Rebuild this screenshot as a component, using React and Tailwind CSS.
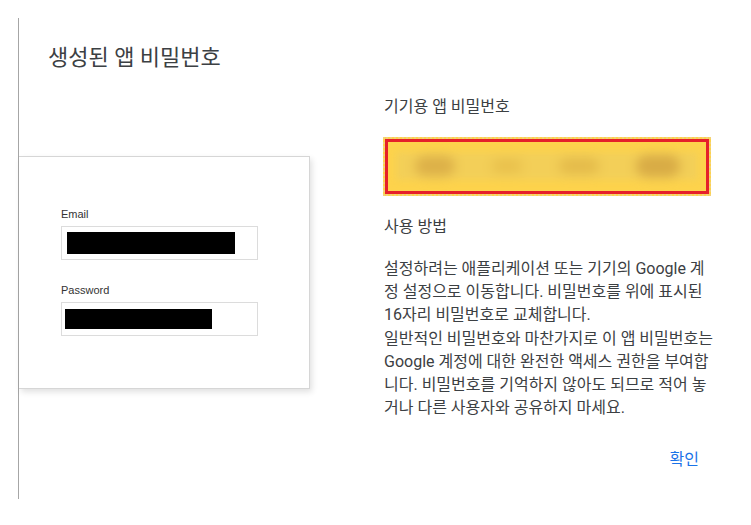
import React from 'react';

const ko = { fontFamily: 'Roboto, "Noto Sans CJK KR", sans-serif' };
const arial = { fontFamily: '"Liberation Sans", Arial, sans-serif' };

const Field = ({ label, bar, pad }) => (
  <div>
    <p className="text-[11px] text-[#333] font-medium leading-none mb-[6px]" style={arial}>{label}</p>
    <div className={`w-[197px] h-[34px] border border-[#dcdcdc] flex items-center ${pad}`}>
      <div className={`bg-black ${bar}`}></div>
    </div>
  </div>
);

const App = () => {
  return (
    <div className="w-[751px] h-[525px] bg-white flex pt-[18px] pl-[18px] overflow-hidden" style={ko}>
      <div className="w-[366px] h-[481px] border-l border-[#a6a6a6] shrink-0">
        <h1 className="pl-[29px] pt-[25px] text-[22px] leading-[30px] text-[#3c4043]">생성된 앱 비밀번호</h1>
        <div className="mt-[83px] w-[291px] h-[233px] bg-white border border-l-0 border-[#d6d6d6] shadow-[2px_3px_6px_rgba(0,0,0,0.12)] pl-[42px] pt-[52px] flex flex-col gap-[25px]">
          <Field label="Email" bar="w-[168px] h-[22px]" pad="pl-[5px]" />
          <Field label="Password" bar="w-[147px] h-[20px]" pad="pl-[3px]" />
        </div>
      </div>
      <div className="w-[330px] pt-[77px] text-[#3c4043]">
        <h2 className="text-[16px] leading-[24px]">기기용 앱 비밀번호</h2>
        <div className="mt-[18px] w-[328px] h-[59px] -ml-px bg-[#fdd34c] border-2 border-dotted border-[#f2d27a]">
          <div className="w-full h-full border-[3px] border-[#e5202a] relative overflow-hidden">
            <div className="absolute left-[8px] right-[8px] top-[10px] h-[28px] bg-[#f3cf58] blur-[3px] flex items-center justify-around">
              <span className="w-[40px] h-[20px] rounded-full bg-[#dcb048] blur-[4px]"></span>
              <span className="w-[30px] h-[14px] rounded-full bg-[#e8c04c] blur-[4px]"></span>
              <span className="w-[40px] h-[16px] rounded-full bg-[#e4bb4a] blur-[4px]"></span>
              <span className="w-[44px] h-[22px] rounded-full bg-[#d8ab45] blur-[4px]"></span>
            </div>
          </div>
        </div>
        <h3 className="mt-[19px] text-[16px] leading-[24px]">사용 방법</h3>
        <p className="mt-[18px] text-[16px] leading-[23.2px]">
          설정하려는 애플리케이션 또는 기기의 Google 계<br />
          정 설정으로 이동합니다. 비밀번호를 위에 표시된<br />
          16자리 비밀번호로 교체합니다.<br />
          일반적인 비밀번호와 마찬가지로 이 앱 비밀번호는<br />
          Google 계정에 대한 완전한 액세스 권한을 부여합<br />
          니다. 비밀번호를 기억하지 않아도 되므로 적어 놓<br />
          거나 다른 사용자와 공유하지 마세요.
        </p>
        <div className="flex justify-end pr-[15px] mt-[29px]">
          <button className="text-[16px] leading-[24px] text-[#1a73e8]">확인</button>
        </div>
      </div>
    </div>
  );
};

export default App;
